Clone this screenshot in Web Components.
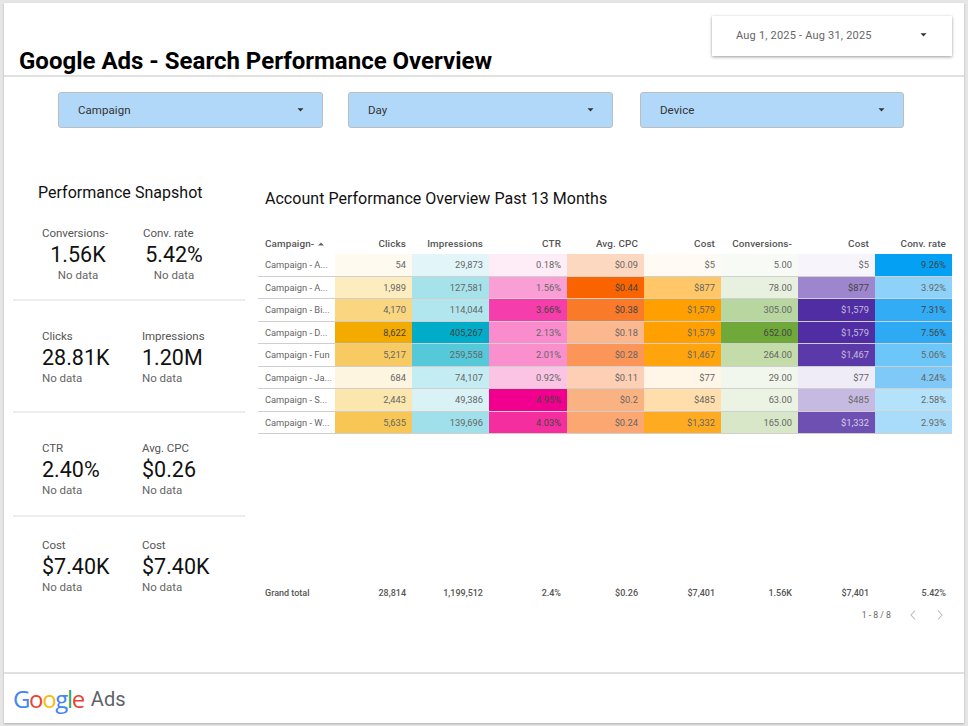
<!DOCTYPE html>
<html><head><meta charset="utf-8"><style>
html,body{margin:0;padding:0;background:#e6e6e6;width:968px;height:726px;overflow:hidden;font-family:Roboto,sans-serif}
</style></head><body>
<report-page>
  <report-header slot="header" title-text="Google Ads - Search Performance Overview" date="Aug 1, 2025 - Aug 31, 2025"></report-header>
  <filter-bar slot="filters"></filter-bar>
  <snapshot-panel slot="side"></snapshot-panel>
  <perf-table slot="main"></perf-table>
  <ads-footer slot="footer"></ads-footer>
</report-page>
<script>
const caret=c=>`<svg width="7" height="4" viewBox="0 0 7 4" style="display:block;margin-bottom:1px"><path d="M.5 .2h6L3.5 3.4z" fill="${c}"/></svg>`;
function def(name,css,render){
  customElements.define(name,class extends HTMLElement{
    connectedCallback(){
      if(this.shadowRoot)return;
      const r=this.attachShadow({mode:'open'});
      r.innerHTML=`<style>${css}</style>`+render(this);
    }
  });
}
def('report-page',`
:host{display:flex;flex-direction:column;width:960px;height:720px;margin:3px 4px;background:#fff;box-shadow:0 1px 2px rgba(0,0,0,.25)}
.mid{flex:1;display:flex;min-height:0}
`,()=>`<slot name="header"></slot><slot name="filters"></slot><div class="mid"><slot name="side"></slot><slot name="main"></slot></div><slot name="footer"></slot>`);

def('report-header',`
:host{display:flex;justify-content:space-between;height:74px;box-sizing:border-box;border-bottom:2px solid #e0e0e0;padding:0 12px 0 15px}
h1{margin:0 0 -1px;align-self:flex-end;font:700 24px/30px Roboto,sans-serif;color:#000;letter-spacing:0}
.date{width:240px;height:40px;margin-top:13px;background:#fff;box-shadow:0 1px 3px rgba(0,0,0,.4);display:flex;align-items:center;justify-content:space-between;padding:0 25px 1px 24px;box-sizing:border-box;font:400 11px Roboto,sans-serif;color:#666;letter-spacing:.2px}
`,h=>`<h1>${h.getAttribute('title-text')}</h1><div class="date"><span>${h.getAttribute('date')}</span>${caret('#333')}</div>`);

def('filter-chip',`
:host{display:flex;align-items:center;justify-content:space-between;width:265px;height:36px;box-sizing:border-box;background:#b2d8f9;border:1px solid #b9bec3;border-radius:3px;padding:0 18px 0 19px;font:400 11.5px Roboto,sans-serif;color:#333;letter-spacing:.05px}
`,h=>`<slot></slot>${caret('#333')}`);
def('filter-bar',`
:host{display:flex;padding:15px 0 0 54px;height:50px;box-sizing:content-box}
.g1{margin-right:25px}.g2{margin-right:27px}
`,()=>`<filter-chip class="g1">Campaign</filter-chip><filter-chip class="g2">Day</filter-chip><filter-chip style="width:264px">Device</filter-chip>`);

def('score-card',`
:host{display:block;color:#000}
.l{font:400 11.5px/14px Roboto,sans-serif;color:#555;white-space:nowrap;margin-bottom:2px;letter-spacing:-.05px}
.v{font:400 21.5px/26px Roboto,sans-serif;color:#111;white-space:nowrap}
.n{font:400 11.5px/14px Roboto,sans-serif;color:#666;white-space:nowrap}
:host([center]) .v,:host([center]) .n{text-align:center}
`,h=>`<div class="l">${h.getAttribute('label')}</div><div class="v">${h.getAttribute('value')}</div><div class="n">No data</div>`);

def('score-row',`
:host{display:grid;grid-template-columns:100px 100px;margin:0 0 0 9px;width:232px;box-sizing:border-box;padding-left:29px;border-bottom:2px solid #ececec}
`,()=>`<slot></slot>`);

def('snapshot-panel',`
:host{display:block;width:254px;flex:none;padding-top:39px;box-sizing:border-box}
h2{margin:0 0 21px 34px;font:400 16px/24px Roboto,sans-serif;color:#111;letter-spacing:.03px}
.r1{height:75px}.r2{height:112px;padding-top:28px}.r3{height:104px;padding-top:28px}.r4{padding-top:21px;border:0}
`,()=>`<h2>Performance Snapshot</h2>
<score-row class="r1"><score-card center label="Conversions-" value="1.56K" style="width:72px"></score-card><score-card center label="Conv. rate" value="5.42%" style="width:62px;margin-left:1px"></score-card></score-row>
<score-row class="r2"><score-card label="Clicks" value="28.81K"></score-card><score-card label="Impressions" value="1.20M"></score-card></score-row>
<score-row class="r3"><score-card label="CTR" value="2.40%"></score-card><score-card label="Avg. CPC" value="$0.26"></score-card></score-row>
<score-row class="r4"><score-card label="Cost" value="$7.40K"></score-card><score-card label="Cost" value="$7.40K"></score-card></score-row>`);

const heads=['Campaign-','Clicks','Impressions','CTR','Avg. CPC','Cost','Conversions-','Cost','Conv. rate'];
const rows=[
['Campaign - A...',['54','#fffaf0'],['29,873','#e2f5f9'],['0.18%','#feecf6'],['$0.09','#fdd8c0'],['$5','#fffaf3'],['5.00','#f8faf5'],['$5','#f7f5fb'],['9.26%','#03a0f3']],
['Campaign - A...',['1,989','#fdecc0'],['127,581','#a6e2ea'],['1.56%','#fa9fd5'],['$0.44','#f96400'],['$877','#ffc767'],['78.00','#e8f1e0'],['$877','#9d86cd'],['3.92%','#8ed2f9']],
['Campaign - Bi...',['4,170','#f9d67f'],['114,044','#b2e6ee'],['3.66%','#f53dab'],['$0.38','#f97a28'],['$1,579','#ffa000'],['305.00','#b8d6a0'],['$1,579','#512da4','#c4bedb'],['7.31%','#32acf5']],
['Campaign - D...',['8,622','#f3ab00'],['405,267','#00acc8'],['2.13%','#fa8ccd'],['$0.18','#fbb88f'],['$1,579','#ffa000'],['652.00','#6fa93a'],['$1,579','#512da4','#c4bedb'],['7.56%','#2eaaf5']],
['Campaign - Fun',['5,217','#f8ca63'],['259,558','#55c8da'],['2.01%','#fa8fce'],['$0.28','#fb9658'],['$1,467','#ffa40d'],['264.00','#c3dca9'],['$1,467','#5b39a8','#c4bedb'],['5.06%','#6cc6f8']],
['Campaign - Ja...',['684','#fef5e0'],['74,107','#c4edf3'],['0.92%','#fbc4e5'],['$0.11','#fdd0b5'],['$77','#fff6e8'],['29.00','#f2f7ed'],['$77','#efecf7'],['4.24%','#7ec9f7']],
['Campaign - S...',['2,443','#fbe6ae'],['49,386','#d8f2f6'],['4.95%','#f1008f'],['$0.2','#fbb283'],['$485','#ffdeab'],['63.00','#ebf3e3'],['$485','#c6bae2'],['2.58%','#b4e2fa']],
['Campaign - W...',['5,635','#f7c654'],['139,696','#a0e0ea'],['4.03%','#f52ea0'],['$0.24','#fca672'],['$1,332','#ffab22'],['165.00','#d8e7c8'],['$1,332','#6e4fb2','#d5d0e6'],['2.93%','#a8dcfa']]];
const totals=['Grand total','28,814','1,199,512','2.4%','$0.26','$7,401','1.56K','$7,401','5.42%'];
const dark=new Set(['#f53dab','#f1008f','#f52ea0','#f96400','#f97a28','#f3ab00','#00acc8','#6fa93a','#03a0f3','#9d86cd','#32acf5','#2eaaf5']);
def('perf-table',`
:host{display:flex;flex-direction:column;width:694px;padding-top:42px;box-sizing:content-box}
h2{margin:0 0 20px 7px;font:400 16px/30px Roboto,sans-serif;color:#111;letter-spacing:.03px}
.grid{display:grid;grid-template-columns:77px 77px 77px 78px 77px 77px 77px 77px 77px;font:400 9.3px Roboto,sans-serif;color:#666}
.h{font-weight:500;font-size:9.9px;color:#555;height:20px;line-height:20px;text-align:right;padding-right:6px;letter-spacing:.12px;white-space:nowrap}
.h.f{text-align:left;padding:0 0 0 7px;display:flex;align-items:center;gap:4px;height:20px}
.c{height:22.5px;line-height:22px;text-align:right;padding-right:6px;border-bottom:1px solid #cfcfcf;box-sizing:border-box;white-space:nowrap}
.c.f{text-align:left;padding:0 0 0 7px}
.t{font-weight:500;color:#555;font-size:9px;text-align:right;padding-right:6px;height:20px;line-height:20px;white-space:nowrap}
.t.f{text-align:left;padding-left:7px}
.spacer{flex:none;height:149px}
.pg{display:flex;align-items:center;justify-content:flex-end;height:24px;font:400 8.7px Roboto,sans-serif;color:#666;padding-right:8px}
.pg span{margin-right:18px}
.pg svg{display:block}
.pg svg+svg{margin-left:19px}
`,()=>{
 let g=heads.map((h,i)=>i==0?`<div class="h f">${h}<svg width="6" height="4" viewBox="0 0 6 4"><path d="M0 3.6h6L3 .4z" fill="#666"/></svg></div>`:`<div class="h">${h}</div>`).join('');
 rows.forEach(r=>{g+=`<div class="c f">${r[0]}</div>`;g+=r.slice(1).map(([t,b,col])=>`<div class="c" style="background:${b};${col?`color:${col}`:dark.has(b)?'color:#444':''}">${t}</div>`).join('');});
 const tot=totals.map((t,i)=>`<div class="t${i==0?' f':''}">${t}</div>`).join('');
 const chev=d=>`<svg width="8" height="12" viewBox="0 0 8 12"><path d="${d}" fill="none" stroke="#bdbdbd" stroke-width="1.1"/></svg>`;
 return `<h2>Account Performance Overview Past 13 Months</h2><div class="grid">${g}</div><div class="spacer"></div><div class="grid">${tot}</div><div class="pg"><span>1 - 8 / 8</span>${chev('M6 1.5 2 6l4 4.5')}${chev('M2 1.5 6 6l-4 4.5')}</div>`;
});

def('ads-footer',`
:host{display:flex;align-items:center;height:51px;border-top:2px solid #e0e0e0;padding-left:9px;box-sizing:border-box;font:500 24px/30px "Open Sans",sans-serif;letter-spacing:-1.35px}
.g{color:#4285f4}.r{color:#ea4335}.y{color:#fbbc05}.e{color:#34a853}
.ads{color:#5f6368;margin-left:7px;font:400 20px/30px Roboto,sans-serif;letter-spacing:0}
`,()=>`<span class="g">G</span><span class="r">o</span><span class="y">o</span><span class="g">g</span><span class="e">l</span><span class="r">e</span><span class="ads">Ads</span>`);
</script>
</body></html>
